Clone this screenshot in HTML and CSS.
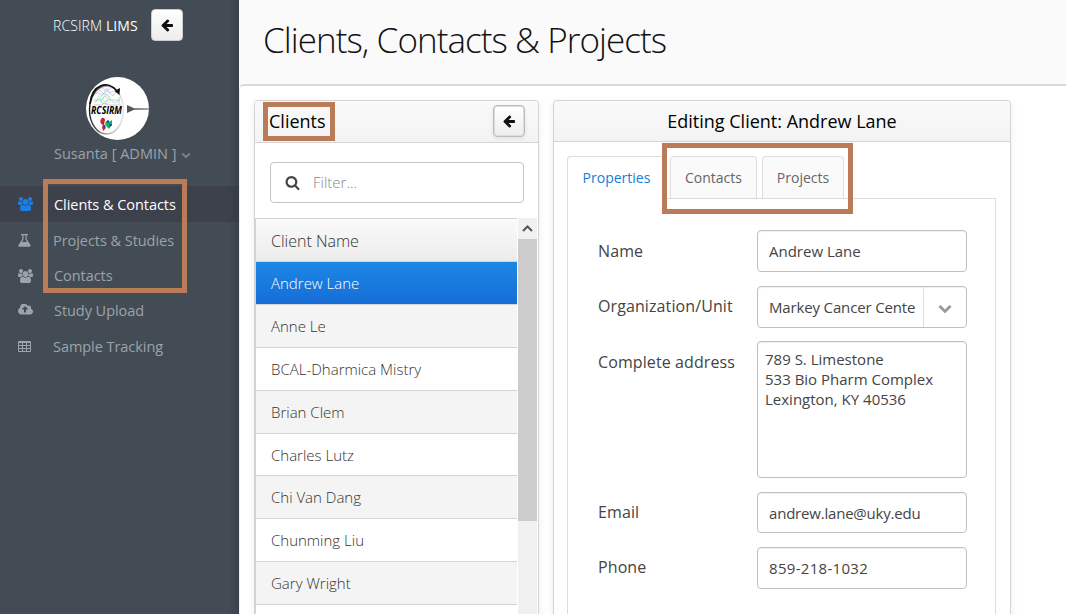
FILE: index.html
```html
<!DOCTYPE html>
<html lang="en">
<head>
<meta charset="utf-8">
<title>RCSIRM LIMS</title>
<link rel="stylesheet" href="styles.css">
</head>
<body>
<svg class="defs" width="0" height="0">
  <symbol id="arrow" viewBox="0 0 1792 1792"><path d="M1664 896v128q0 53-32.500 90.500t-84.500 37.500h-704l293 294q38 36 38 90t-38 90l-75 76q-37 37-90 37-52 0-91-37l-651-652q-37-37-37-90 0-52 37-91l651-650q38-38 91-38 52 0 90 38l75 74q38 38 38 91t-38 91l-293 293h704q52 0 84.500 37.500t32.500 90.500z"/></symbol>
  <symbol id="users" viewBox="0 0 1920 1792"><path d="M593 896q-162 5-265 128h-134q-82 0-138-40.500t-56-118.500q0-353 124-353 6 0 43.500 21t97.500 42.500 119 21.500q67 0 133-23-5 37-5 66 0 139 81 256zm1071 637q0 120-73 189.500t-194 69.500h-874q-121 0-194-69.500t-73-189.500q0-53 3.500-103.500t14-109 26.500-108.500 43-97.500 62-81 85.500-53.500 111.500-20q10 0 43 21.500t73 48 107 48 135 21.500 135-21.500 107-48 73-48 43-21.500q61 0 111.500 20t85.500 53.500 62 81 43 97.500 26.500 108.500 14 109 3.500 103.500zm-1024-1277q0 106-75 181t-181 75-181-75-75-181 75-181 181-75 181 75 75 181zm704 384q0 159-112.500 271.500t-271.500 112.500-271.500-112.500-112.500-271.500 112.500-271.500 271.500-112.500 271.500 112.500 112.500 271.500zm576 225q0 78-56 118.500t-138 40.500h-134q-103-123-265-128 81-117 81-256 0-29-5-66 66 23 133 23 59 0 119-21.500t97.500-42.500 43.500-21q124 0 124 353zm-128-609q0 106-75 181t-181 75-181-75-75-181 75-181 181-75 181 75 75 181z"/></symbol>
  <symbol id="chevron" viewBox="0 0 1792 1792"><path d="M1683 808l-742 741q-19 19-45 19t-45-19l-742-741q-19-19-19-45.500t19-45.500l166-165q19-19 45-19t45 19l531 531 531-531q19-19 45-19t45 19l166 165q19 19 19 45.500t-19 45.500z"/></symbol>
</svg>
<div class="page">
  <aside class="sidebar">
    <div class="brand">
      <span class="brand-name">RCSIRM <b>LIMS</b></span>
      <button class="square-btn"><svg width="14" height="14"><use href="#arrow"/></svg></button>
    </div>
    <div class="profile">
      <svg class="avatar" viewBox="0 0 63 63" width="63" height="63">
        <defs><linearGradient id="rim" x1="0" x2="1"><stop offset="0" stop-color="#222"/><stop offset=".5" stop-color="#aaa"/><stop offset="1" stop-color="#e4e4e4"/></linearGradient></defs>
        <circle cx="31.500" cy="31.500" r="31.500" fill="#fff"/>
        <ellipse cx="20.500" cy="33" rx="17" ry="24" fill="#fdfdfd" stroke="url(#rim)" stroke-width="1.400"/>
        <g fill="none" stroke-width=".7">
          <path stroke="#c0bcec" d="M9 18l5-5 3 4 4-6 3 5 5-3M10 15l6 3 5-4 6 5 3-4M16 11l5 3 4-3"/>
          <path stroke="#9addb9" d="M7 23h9l4-6 5 6h9M8 26l5-4 5 5 5-5 6 4 5-3M13 18l-3 7M33 20v7"/>
          <circle cx="19" cy="22" r="5" stroke="#9addb9"/><circle cx="19" cy="22" r="2.500" stroke="#9addb9"/>
          <path stroke="#e0a0cc" d="M8 28h8l2-2 4 2h13"/>
        </g>
        <path d="M4 27C6 7 22 3 31 14" fill="none" stroke="#111" stroke-width="1.800"/>
        <path d="M28.500 14l5.500-3-.5 7z" fill="#111"/>
        <text x="5" y="36.500" class="avatar-text" textLength="31" lengthAdjust="spacingAndGlyphs">RCSIRM</text>
        <path d="M41 28l7 3.300 15 .3v.8l-15 .3-7 3.300z" fill="#555"/>
        <path d="M15 42q3-3 4 1l-1 4 2 4-3 3-1-4 1-2q-4-2-2-6z" fill="#c9203d"/>
        <path d="M20 44l3 1 3-2v5l-3 4-2-2-2-3z" fill="#12b942"/>
        <circle cx="22" cy="44.500" r="1.200" fill="#2430d8"/><circle cx="24.500" cy="48" r="1.200" fill="#2430d8"/><circle cx="18.500" cy="49" r="1" fill="#2430d8"/>
      </svg>
      <div class="user">Susanta [ ADMIN ] <svg class="caret" width="10" height="7" viewBox="0 0 10 7"><path d="M1.200 1.500L5 5.200 8.800 1.500"/></svg></div>
    </div>
    <nav class="nav">
      <a class="nav-item active"><svg class="users" width="15" height="14"><use href="#users"/></svg><span>Clients &amp; Contacts</span></a>
      <a class="nav-item nudge"><svg width="13" height="13" viewBox="0 0 13 13"><path fill-rule="evenodd" d="M3 0h7v1.300H8.700v4L12.500 11q.8 1.500-.8 1.700H1.300Q-.3 12.500.5 11L4.300 5.300v-4H3zM5.500 1.300v4.300L4 8h5L7.500 5.600V1.300z"/></svg><span>Projects &amp; Studies</span></a>
      <a class="nav-item"><svg class="users" width="15" height="14"><use href="#users"/></svg><span>Contacts</span></a>
      <a class="nav-item"><svg width="15" height="13" viewBox="0 256 1920 1536"><path d="M1280 864q0-14-9-23l-352-352q-9-9-23-9t-23 9l-351 351q-10 12-10 24 0 14 9 23t23 9h224v352q0 13 9.500 22.500t22.500 9.500h192q13 0 22.500-9.500t9.500-22.500v-352h224q13 0 22.500-9.500t9.500-22.500zm640 288q0 159-112.500 271.500t-271.500 112.500h-1088q-185 0-316.500-131.500t-131.500-316.500q0-130 70-240t188-165q-2-30-2-43 0-212 150-362t362-150q156 0 285.500 87t188.500 231q71-62 166-62 106 0 181 75t75 181q0 76-41 138 130 31 213.500 135.500t83.500 238.500z"/></svg><span>Study Upload</span></a>
      <a class="nav-item nudge"><svg width="13" height="11" viewBox="0 0 13 11"><path fill-rule="evenodd" d="M1 0h11q1 0 1 1v9q0 1-1 1H1q-1 0-1-1V1q0-1 1-1zM1 2v2h3V2zm4 0v2h3V2zm4 0v2h3V2zM1 5v2h3V5zm4 0v2h3V5zm4 0v2h3V5zM1 8v2h3V8zm4 0v2h3V8zm4 0v2h3V8z"/></svg><span>Sample Tracking</span></a>
    </nav>
  </aside>
  <main class="main">
    <header class="title-bar"><h1>Clients, Contacts &amp; Projects</h1></header>
    <div class="content">
      <section class="panel clients">
        <div class="panel-head clients-head"><h2>Clients</h2><button class="square-btn outlined"><svg width="14" height="14"><use href="#arrow"/></svg></button></div>
        <div class="filter"><svg width="15" height="15" viewBox="0 0 1792 1792"><path d="M1216 832q0-185-131.500-316.500t-316.500-131.500-316.500 131.500-131.500 316.500 131.500 316.500 316.500 131.500 316.500-131.500 131.500-316.500zm512 832q0 52-38 90t-90 38q-54 0-90-38l-343-342q-179 124-399 124-143 0-273.500-55.500t-225-150-150-225-55.500-273.500 55.500-273.500 150-225 225-150 273.500-55.500 273.500 55.500 225 150 150 225 55.500 273.500q0 220-124 399l343 343q37 37 37 90z"/></svg><span>Filter...</span></div>
        <div class="table">
          <div class="rows">
            <div class="row head">Client Name</div>
            <div class="row selected">Andrew Lane</div>
            <div class="row odd">Anne Le</div>
            <div class="row">BCAL-Dharmica Mistry</div>
            <div class="row odd">Brian Clem</div>
            <div class="row short">Charles Lutz</div>
            <div class="row odd">Chi Van Dang</div>
            <div class="row">Chunming Liu</div>
            <div class="row odd">Gary Wright</div>
            <div class="row"></div>
          </div>
          <div class="scrollbar"><svg width="19" height="21" viewBox="0 0 19 21"><path d="M5 13L9.500 8.500 14 13"/></svg><div class="thumb"></div></div>
        </div>
      </section>
      <section class="panel editor">
        <div class="panel-head editor-head"><h2>Editing Client: Andrew Lane</h2></div>
        <div class="tabs"><a class="tab current">Properties</a><a class="tab contacts">Contacts</a><a class="tab projects">Projects</a></div>
        <div class="form">
          <div class="field name"><label>Name</label><div class="input">Andrew Lane</div></div>
          <div class="field unit"><label>Organization/Unit</label><div class="input select"><span>Markey Cancer Cente</span><i><svg width="14" height="14"><use href="#chevron"/></svg></i></div></div>
          <div class="field address"><label>Complete address</label><div class="input area">789 S. Limestone<br>533 Bio Pharm Complex<br>Lexington, KY 40536</div></div>
          <div class="field email"><label>Email</label><div class="input">andrew.lane@uky.edu</div></div>
          <div class="field phone"><label>Phone</label><div class="input">859-218-1032</div></div>
        </div>
      </section>
    </div>
  </main>
  <div class="mark mark-nav"></div>
  <div class="mark mark-clients"></div>
  <div class="mark mark-tabs"></div>
</div>
</body>
</html>
```

FILE: styles.css
```css
* { box-sizing: border-box; }
body { margin: 0; font-family: "Open Sans", sans-serif; font-size: 15px; color: #444; }
h1, h2 { margin: 0; font-weight: 400; }
svg { display: block; flex: none; }
.defs { position: absolute; }
.page { position: relative; display: flex; width: 1066px; height: 614px; overflow: hidden; }

.sidebar { width: 239px; flex: none; background: linear-gradient(to left, #39424b, #434c55 10px); color: #9ba3ab; }
.brand { display: flex; align-items: center; padding: 8px 0 0 53px; height: 42px; }
.brand-name { width: 98px; font-size: 14px; letter-spacing: .1px; font-weight: 300; color: #fff; white-space: nowrap; }
.brand-name b { font-weight: 400; }
.square-btn { width: 32px; height: 32px; padding: 0; display: flex; align-items: center; justify-content: center; border: 1px solid #ccc; border-radius: 4px; background: linear-gradient(#fff, #ededed); fill: #111; }
.outlined { border: 1px solid #bbb; box-shadow: 0 2px 4px #0001, inset 0 0 0 1px #ddd; }
.profile { padding: 35px 0 0 53px; height: 144px; }
.avatar { margin-left: 33px; }
.avatar-text { font: italic bold 10px "Open Sans", sans-serif; fill: #000; }
.user { display: flex; align-items: center; gap: 5px; margin-top: 4px; padding-left: 1px; font-size: 14.500px; line-height: 20px; white-space: nowrap; }
.caret { fill: none; stroke: #77828d; stroke-width: 2; margin-top: 2px; }
.nav-item { display: flex; align-items: center; height: 35.300px; padding-left: 18px; fill: #9ba3ab; white-space: nowrap; }
.nav-item svg { width: 15px; }
.nav-item span { margin-left: 21px; font-size: 14.500px; letter-spacing: -.05px; }
.nav-item.nudge svg { width: 13px; }
.nav-item.nudge span { margin-left: 22px; }
.nav-item.active { height: 36px; margin-bottom: .700px; background: linear-gradient(to left, #353c46, #3c414c 10px); color: #fff; fill: #1a80e5; }

.main { flex: 1; background: #fafafa; }
.title-bar { height: 84px; padding: 16px 0 0 24px; }
.title-bar h1 { font-size: 35px; line-height: 48px; letter-spacing: -.94px; font-weight: 300; color: #111; white-space: nowrap; }
.content { display: flex; align-items: flex-start; gap: 14px; height: 530px; padding: 14px 0 0 14px; border-top: 2px solid #d9d9d9; border-left: 1px solid #eee; border-top-left-radius: 5px; background: #fff; }
.panel { height: 540px; border: 1px solid #d4d4d4; border-radius: 4px 4px 0 0; background: #fff; box-shadow: 0 2px 8px #00000012; }
.panel-head { border-bottom: 1px solid #d4d4d4; background: linear-gradient(#fafafa, #f3f3f3); color: #000; border-radius: 4px 4px 0 0; }
.panel-head h2 { font-size: 18px; line-height: 24px; white-space: nowrap; }
.clients { width: 285px; }
.clients-head { display: flex; align-items: center; justify-content: space-between; height: 42px; padding: 0 13px 0 14px; }
.clients-head h2 { padding-bottom: 2px; }
.clients-head .square-btn { margin-top: -1px; }
.filter { display: flex; align-items: center; gap: 13px; width: 254px; height: 41px; margin: 19px 0 15px 15px; padding: 0 0 1px 14px; border: 1px solid #c4c4c4; border-radius: 4px; font-weight: 300; color: #888; fill: #444; }
.table { display: flex; border-left: 1px solid #d4d4d4; }
.rows { width: 261px; border-top: 1px solid #d4d4d4; }
.row { display: flex; align-items: center; height: 43px; padding: 0 0 0 15px; border-bottom: 1px solid #d4d4d4; font-size: 15px; font-weight: 300; color: #333; }
.row.head { padding-top: 2px; font-size: 16px; background: linear-gradient(#fafafa, #ececec); }
.row.odd { background: #f4f4f4; }
.row.short { height: 42px; }
.row.selected { color: #fff; background: linear-gradient(#1c87e5, #166dd6); }
.scrollbar { width: 20px; height: 400px; border-left: 1px solid #fff; background: #f0f0f0; }
.scrollbar svg { fill: none; stroke: #555; stroke-width: 2; }
.thumb { height: 282px; background: #ccc; }

.editor { width: 458px; }
.editor-head { height: 41px; padding-top: 8px; text-align: center; }
.tabs { display: flex; align-items: flex-end; margin: 14px 14px 0 13px; height: 43px; border-bottom: 1px solid #ddd; font-size: 14px; }
.tab { display: flex; align-items: center; justify-content: center; height: 42px; border: 1px solid #ddd; border-bottom: 0; border-radius: 4px 4px 0 0; background: #fafafa; color: #666; }
.tab.current { width: 99px; height: 43px; margin-bottom: -1px; padding-bottom: 2px; background: #fff; color: #187dd9; }
.tab.contacts { width: 87px; margin-left: 4px; }
.tab.projects { width: 82px; margin-left: 5px; }
.form { margin: 0 14px 0 13px; height: 440px; border: 1px solid #ddd; border-top: 0; padding: 31px 0 0 30px; }
.field { display: flex; }
.field label { width: 159px; font-size: 16px; line-height: 22px; letter-spacing: .1px; padding-top: 10px; white-space: nowrap; }
.input { display: flex; align-items: center; width: 210px; height: 42px; padding: 0 0 0 11px; border: 1px solid #c0c0c0; border-radius: 4px; box-shadow: inset 0 1px 1px #00000010; white-space: nowrap; }
.unit, .email, .phone { margin-top: 14px; }
.unit label, .email label, .phone label { padding-top: 9px; }
.address { margin-top: 13px; }
.area { display: block; height: 137px; padding: 7px; line-height: 20px; }
.select { justify-content: space-between; }
.select span { letter-spacing: -.15px; }
.select i { display: flex; align-items: center; justify-content: center; width: 43px; height: 100%; padding-top: 2px; border-left: 1px solid #ddd; fill: #999; }
.email .input { height: 41px; padding-top: 1px; letter-spacing: -.2px; }
.phone .input { letter-spacing: .3px; }

.mark { position: absolute; border: 5px solid #b97b58; }
.mark-nav { left: 43px; top: 179px; width: 144px; height: 114px; }
.mark-clients { left: 263px; top: 102px; width: 72px; height: 39px; }
.mark-tabs { left: 662px; top: 143px; width: 191px; height: 71px; }
```
